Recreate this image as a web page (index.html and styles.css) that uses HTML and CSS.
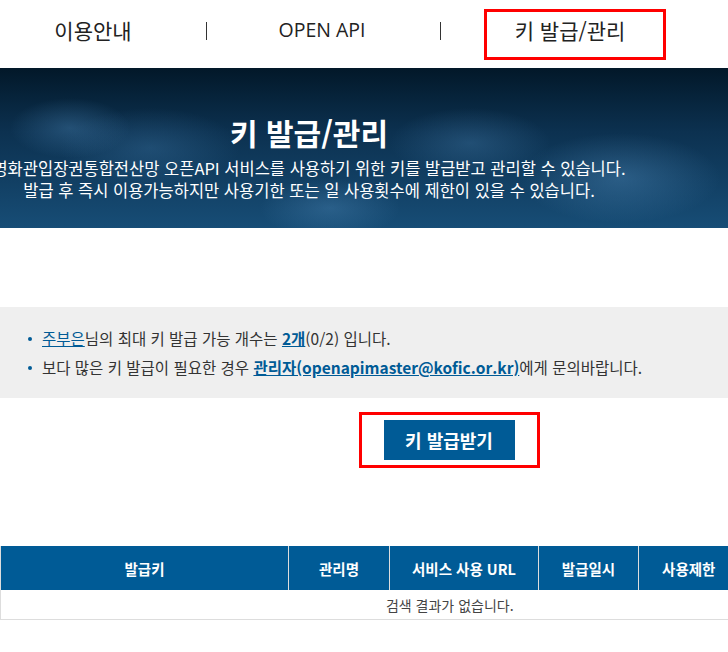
FILE: index.html
```html
<!DOCTYPE html>
<html lang="ko">
<head>
    <meta charset="UTF-8">
    <meta name="viewport" content="width=device-width, initial-scale=1.0">
    <title>키 발급/관리</title>
    <link rel="stylesheet" href="styles.css">
</head>
<body>

    <!-- 상단 메뉴 -->
    <header class="gnb">
        <a href="#" class="gnb-item item-guide">이용안내</a>
        <span class="gnb-bar bar-1"></span>
        <a href="#" class="gnb-item item-api">OPEN API</a>
        <span class="gnb-bar bar-2"></span>
        <a href="#" class="gnb-item item-key on">키 발급/관리</a>
    </header>

    <!-- 비주얼 영역 -->
    <section class="visual">
        <div class="visual-inner">
            <h2>키 발급/관리</h2>
            <p>영화관입장권통합전산망 오픈API 서비스를 사용하기 위한 키를 발급받고 관리할 수 있습니다.</p>
            <p>발급 후 즉시 이용가능하지만 사용기한 또는 일 사용횟수에 제한이 있을 수 있습니다.</p>
        </div>
    </section>

    <div class="content">
        <div class="info-box">
            <ul>
                <li><a href="#" class="link">주부은</a>님의 최대 키 발급 가능 개수는 <a href="#" class="link strong">2개</a>(0/2) 입니다.</li>
                <li>보다 많은 키 발급이 필요한 경우 <a href="#" class="link medium">관리자(openapimaster@kofic.or.kr)</a>에게 문의바랍니다.</li>
            </ul>
        </div>

        <div class="btn-area">
            <div class="btn-focus">
                <button type="button" class="btn-issue">키 발급받기</button>
            </div>
        </div>

        <table class="key-table">
            <colgroup>
                <col style="width: 288px">
                <col style="width: 101px">
                <col style="width: 149px">
                <col style="width: 100px">
                <col style="width: 100px">
            </colgroup>
            <thead>
                <tr>
                    <th>발급키</th>
                    <th>관리명</th>
                    <th>서비스 사용 URL</th>
                    <th>발급일시</th>
                    <th>사용제한</th>
                </tr>
            </thead>
            <tbody>
                <tr>
                    <td colspan="5" class="no-data">검색 결과가 없습니다.</td>
                </tr>
            </tbody>
        </table>
    </div>

</body>
</html>
```

FILE: styles.css
```css
html, body {
    overflow-x: hidden;
}
body {
    margin: 0;
    padding: 0;
    background-color: #fff;
    color: #333;
    font-family: "Noto Sans CJK KR", "Noto Sans", sans-serif;
}
a {
    text-decoration: none;
    color: inherit;
}

/* 상단 메뉴 */
.gnb {
    display: flex;
    align-items: flex-start;
    height: 68px;
    padding-top: 9px;
    box-sizing: border-box;
}
.gnb-item {
    display: block;
    height: 51px;
    line-height: 42px;
    font-size: 21px;
    color: #222;
    text-align: center;
    box-sizing: border-box;
}
.item-guide {
    width: 186px;
}
.item-api {
    width: 230px;
    font-family: "Open Sans", sans-serif;
    font-size: 19.5px;
}
.item-key {
    width: 182px;
    margin-left: 43px;
    border: 3px solid #f00;
    line-height: 36px;
    padding-right: 10px;
}
.gnb-bar {
    width: 1px;
    height: 18px;
    margin-top: 13px;
    background-color: #333;
}
.bar-1 {
    margin-left: 20px;
}
.bar-2 {
    margin-left: 3px;
}

/* 비주얼 */
.visual {
    height: 160px;
    background-color: #0d2f4b;
    background-image:
        radial-gradient(ellipse 60px 30px at 70px 60px, rgba(80, 140, 190, .35), transparent),
        radial-gradient(ellipse 90px 40px at 150px 80px, rgba(70, 130, 180, .3), transparent),
        radial-gradient(ellipse 80px 35px at 470px 75px, rgba(80, 140, 190, .3), transparent),
        radial-gradient(ellipse 100px 45px at 620px 110px, rgba(90, 150, 200, .35), transparent),
        radial-gradient(ellipse 70px 30px at 330px 140px, rgba(90, 150, 200, .3), transparent),
        linear-gradient(to bottom, #021829 0%, #0c3150 40%, #174d76 100%);
    overflow: hidden;
}
.visual-inner {
    width: 618px;
    display: flex;
    flex-direction: column;
    align-items: center;
    color: #fff;
}
.visual-inner h2 {
    margin: 39px 0 0;
    font-size: 30px;
    line-height: 50px;
    font-weight: bold;
}
.visual-inner p {
    margin: 0;
    font-size: 16.5px;
    line-height: 22px;
    white-space: nowrap;
}

/* 본문 */
.content {
    width: 898px;
    padding-top: 79px;
}
.info-box {
    background-color: #efefef;
    height: 91px;
    box-sizing: border-box;
    padding: 17px 0 0 28px;
}
.info-box ul {
    list-style: none;
    margin: 0;
    padding: 0;
}
.info-box li {
    position: relative;
    padding-left: 14px;
    font-size: 15.5px;
    line-height: 29px;
    color: #333;
}
.info-box li::before {
    content: "";
    position: absolute;
    left: 0;
    top: 13px;
    width: 4px;
    height: 4px;
    border-radius: 50%;
    background-color: #005b96;
}
.link {
    color: #005b96;
    text-decoration: underline;
}
.link.strong {
    font-weight: bold;
}
.link.medium {
    font-weight: 600;
}

.btn-area {
    display: flex;
    justify-content: center;
    padding: 14px 0 78px;
}
.btn-focus {
    border: 3px solid #f00;
    padding: 5px 22px;
}
.btn-issue {
    display: block;
    width: 131px;
    height: 40px;
    border: none;
    background-color: #005b96;
    color: #fff;
    font-family: inherit;
    font-size: 18px;
    font-weight: bold;
    cursor: pointer;
}

.key-table {
    width: 738px;
    border-collapse: collapse;
    table-layout: fixed;
}
.key-table th {
    height: 44px;
    padding: 0;
    background-color: #005b96;
    color: #fff;
    font-size: 14.5px;
    font-weight: bold;
    border-left: 1px solid #ddd;
}
.key-table td {
    height: 29px;
    padding: 0;
    text-align: center;
    font-size: 14px;
    color: #444;
    border-left: 1px solid #ddd;
    border-bottom: 1px solid #ddd;
}
.key-table .no-data {
    padding-left: 160px;
}
```
